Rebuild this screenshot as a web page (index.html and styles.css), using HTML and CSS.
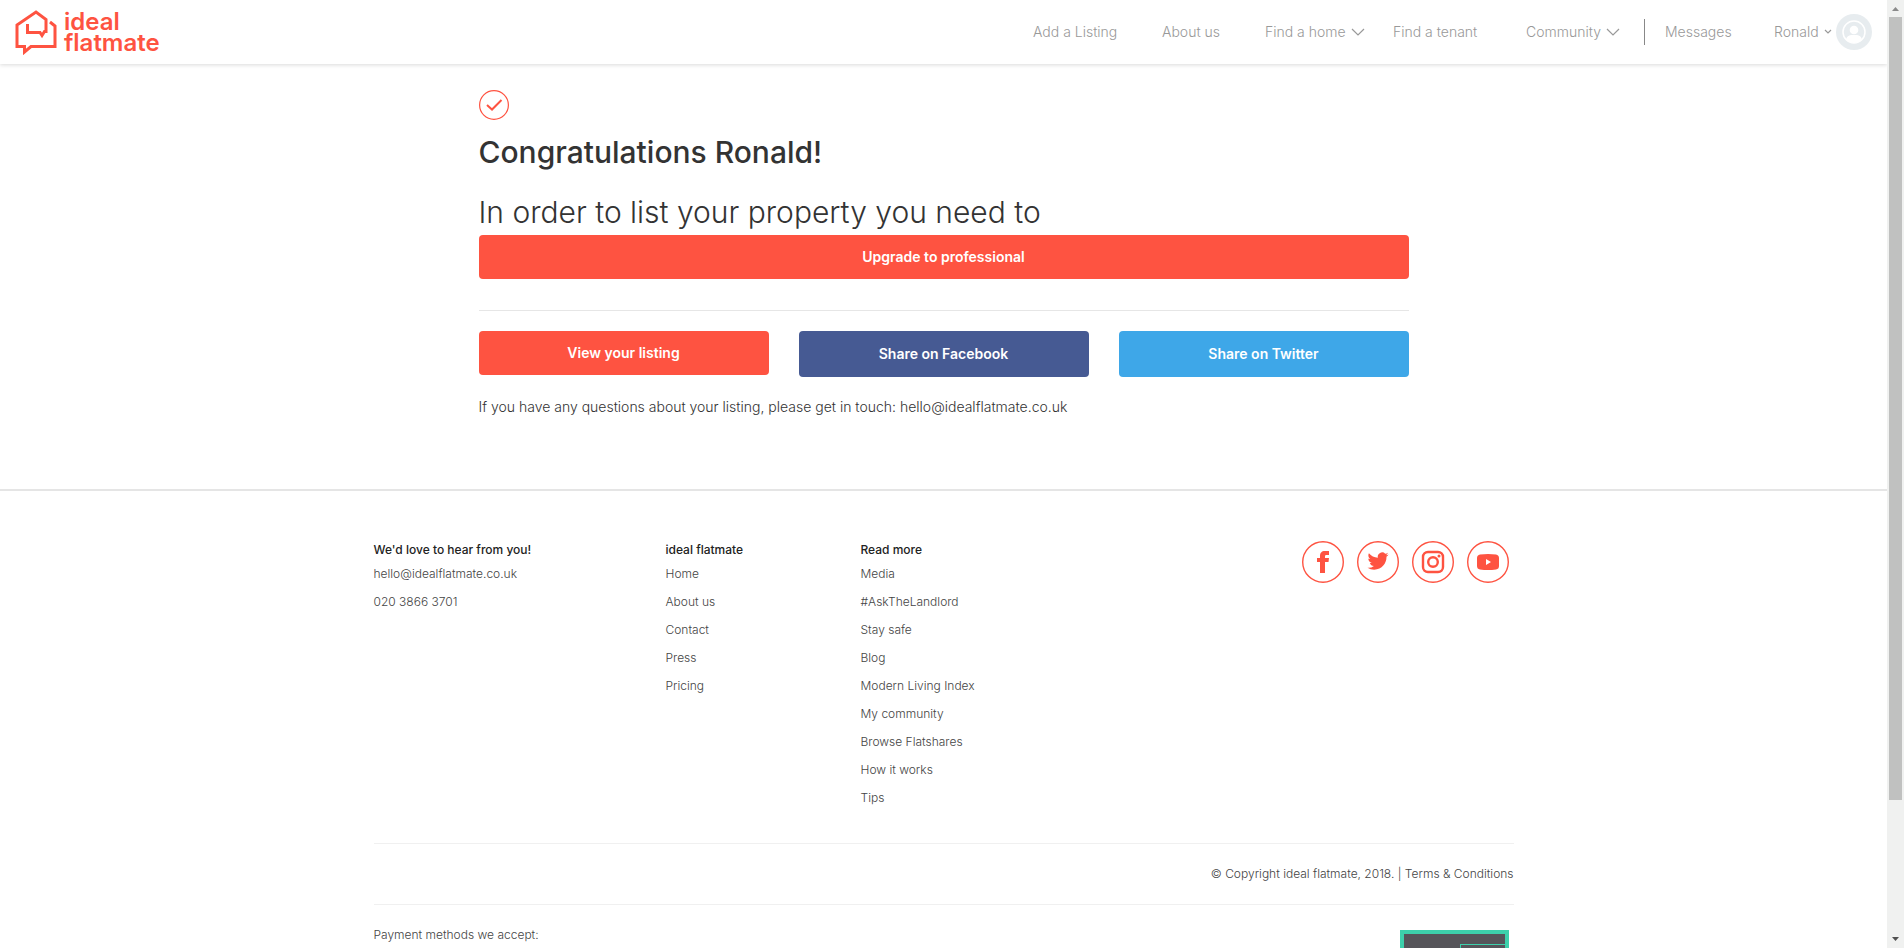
FILE: index.html
```html
<!DOCTYPE html>
<html lang="en">
<head>
<meta charset="utf-8">
<title>ideal flatmate</title>
<link rel="stylesheet" href="styles.css">
</head>
<body>
<div class="page">
  <header class="header">
    <a class="logo" href="#">
      <svg width="42" height="46" viewBox="0 0 42 46" fill="none" stroke="#fe5341" stroke-width="3" aria-hidden="true">
        <path d="M35 13 40 17V37.500H16L9.500 43V37.500H2V16L21 3 31 10.500V22.500H29.500L27 26.500 25 23.500H12.500V15"/>
      </svg>
      <span class="logo-text"><span>ideal</span><span>flatmate</span></span>
    </a>
    <nav class="nav">
      <a href="#">Add a Listing</a>
      <a href="#">About us</a>
      <a class="menu" href="#">Find a home <svg width="14" height="8" viewBox="0 0 14 8" aria-hidden="true"><path d="M1 1 7 7 13 1"/></svg></a>
      <a href="#">Find a tenant</a>
      <a class="menu" href="#">Community <svg width="14" height="8" viewBox="0 0 14 8" aria-hidden="true"><path d="M1 1 7 7 13 1"/></svg></a>
      <a class="messages" href="#">Messages</a>
      <a class="menu" href="#">Ronald <svg width="8" height="6" viewBox="0 0 8 6" aria-hidden="true"><path d="M1 1 4 4 7 1"/></svg></a>
      <svg class="avatar" width="36" height="36" viewBox="0 0 36 36" aria-hidden="true">
        <circle cx="18" cy="18" r="18" fill="#e7ecef"/>
        <circle cx="18" cy="18" r="11" fill="none" stroke="#fff" stroke-width="1.500"/>
        <circle cx="18" cy="16" r="4.300" fill="#fff"/>
        <path d="M10 26C11 21 14 21 18 21S25 21 26 26Q18 32 10 26Z" fill="#fff"/>
      </svg>
    </nav>
  </header>

  <main class="main">
    <svg class="tick" width="30" height="30" viewBox="0 0 30 30" fill="none" stroke="#fe5341" aria-hidden="true">
      <circle cx="15" cy="15" r="14.400" stroke-width="1.200"/>
      <path d="M8 15 13 19.500 22.500 10" stroke-width="2"/>
    </svg>
    <h1>Congratulations Ronald!</h1>
    <h2>In order to list your property you need to</h2>
    <button class="btn" type="button">Upgrade to professional</button>
    <hr class="rule">
    <div class="actions">
      <button class="btn" type="button">View your listing</button>
      <button class="btn facebook" type="button">Share on Facebook</button>
      <button class="btn twitter" type="button">Share on Twitter</button>
    </div>
    <p class="help">If you have any questions about your listing, please get in touch: <a href="#">hello@idealflatmate.co.uk</a></p>
  </main>

  <footer class="footer">
    <div class="container">
      <div class="columns">
        <section>
          <h3>We'd love to hear from you!</h3>
          <ul>
            <li><a href="#">hello@idealflatmate.co.uk</a></li>
            <li><a href="#">020 3866 3701</a></li>
          </ul>
        </section>
        <section>
          <h3>ideal flatmate</h3>
          <ul>
            <li><a href="#">Home</a></li>
            <li><a href="#">About us</a></li>
            <li><a href="#">Contact</a></li>
            <li><a href="#">Press</a></li>
            <li><a href="#">Pricing</a></li>
          </ul>
        </section>
        <section>
          <h3>Read more</h3>
          <ul>
            <li><a href="#">Media</a></li>
            <li><a href="#">#AskTheLandlord</a></li>
            <li><a href="#">Stay safe</a></li>
            <li><a href="#">Blog</a></li>
            <li><a href="#">Modern Living Index</a></li>
            <li><a href="#">My community</a></li>
            <li><a href="#">Browse Flatshares</a></li>
            <li><a href="#">How it works</a></li>
            <li><a href="#">Tips</a></li>
          </ul>
        </section>
        <div class="social">
          <a href="#" aria-label="Facebook"><svg width="42" height="42" viewBox="0 0 42 42"><circle class="ring" cx="21" cy="21" r="20.300"/><path d="M18 32V21H15V17H18V15C18 12 19.500 10 23 10H27V14H24.500C23.300 14 23 14.500 23 15.500V17H27L26.500 21H23V32Z"/></svg></a>
          <a href="#" aria-label="Twitter"><svg width="42" height="42" viewBox="0 0 42 42"><circle class="ring" cx="21" cy="21" r="20.300"/><path transform="translate(10.500 9.500) scale(.88)" d="M23.950 4.570a10 10 0 0 1-2.820.77 4.960 4.960 0 0 0 2.160-2.720c-.95.550-2 .95-3.130 1.180a4.920 4.920 0 0 0-8.380 4.480C7.690 8.090 4.070 6.130 1.640 3.160a4.820 4.820 0 0 0-.67 2.480c0 1.710.87 3.210 2.190 4.100a4.900 4.900 0 0 1-2.230-.62v.06a4.920 4.920 0 0 0 3.950 4.830 5 5 0 0 1-2.210.08 4.940 4.940 0 0 0 4.600 3.420A9.870 9.870 0 0 1 0 19.540a13.990 13.990 0 0 0 7.560 2.210c9.050 0 14-7.500 14-13.980 0-.21 0-.42-.02-.63a9.940 9.940 0 0 0 2.410-2.570z"/></svg></a>
          <a href="#" aria-label="Instagram"><svg width="42" height="42" viewBox="0 0 42 42"><circle class="ring" cx="21" cy="21" r="20.300"/><g fill="none" stroke="#fe5341"><rect x="11" y="11" width="20" height="20" rx="5" stroke-width="2.400"/><circle cx="21" cy="21" r="4.800" stroke-width="2.400"/></g><circle cx="27" cy="15" r="1.500"/></svg></a>
          <a href="#" aria-label="YouTube"><svg width="42" height="42" viewBox="0 0 42 42"><circle class="ring" cx="21" cy="21" r="20.300"/><path fill-rule="evenodd" d="M13 13.500Q21 12.500 29 13.500Q32 14 32 17V25Q32 28 29 28.500Q21 29.500 13 28.500Q10 28 10 25V17Q10 14 13 13.500ZM19 18V24L24 21Z"/></svg></a>
        </div>
      </div>
      <p class="copyright">© Copyright ideal flatmate, 2018. | <a href="#">Terms &amp; Conditions</a></p>
      <div class="payment">
        <p>Payment methods we accept:</p>
        <div class="badge"><div class="badge-inner"></div></div>
      </div>
    </div>
  </footer>
</div>
<div class="scrollbar" aria-hidden="true">
  <svg width="17" height="17" viewBox="0 0 17 17"><path d="M5 11 8.500 7 12 11Z" fill="#8a8a8a"/></svg>
  <div class="track"><div class="thumb"></div></div>
  <svg width="17" height="17" viewBox="0 0 17 17"><path d="M5 6 8.500 10 12 6Z" fill="#505050"/></svg>
</div>
</body>
</html>
```
FILE: styles.css
```css
* { box-sizing: border-box; }

body {
  margin: 0;
  display: flex;
  height: 100vh;
  overflow: hidden;
  background: #fff;
  color: #333;
  font: 300 14px/24px Inter, "Liberation Sans", sans-serif;
}

a { color: inherit; text-decoration: none; }
h1, h2, h3, p, ul { margin: 0; padding: 0; }
ul { list-style: none; }

.page { flex: 1; min-width: 0; overflow: hidden; }

/* Header */
.header {
  display: flex;
  justify-content: space-between;
  align-items: center;
  height: 64px;
  padding: 0 15px;
  box-shadow: 0 1px 4px rgba(0, 0, 0, .15);
}
.logo { display: flex; align-items: center; gap: 7px; color: #fe5341; }
.logo-text { font-size: 24px; font-weight: 600; line-height: 21px; }
.logo-text span { display: block; }
.nav {
  display: grid;
  grid-template-columns: 129px 103px 128px 133px 118px 130px 62px 36px;
  align-items: center;
  color: #999;
  font-size: 14px;
  white-space: nowrap;
}
.nav path { fill: none; stroke: #999; stroke-width: 1.2; }
.nav .avatar path { fill: #fff; stroke: none; }
.menu { display: flex; align-items: center; gap: 5px; }
.messages { padding: 1px 0 1px 20px; border-left: 1px solid #888; }

/* Confirmation */
.main {
  max-width: 960px;
  margin: 0 auto;
  padding: 26px 15px 70px;
}
.tick { display: block; }
h1, h2 { font-size: 30px; line-height: 40px; }
h1 { margin-top: 12px; font-weight: 500; }
h2 { margin-top: 20px; margin-bottom: 3px; font-weight: 300; }
.btn {
  display: block;
  width: 100%;
  height: 44px;
  border: 0;
  border-radius: 4px;
  background: #fe5341;
  color: #fff;
  font: 600 14px/24px Inter, "Liberation Sans", sans-serif;
}
.rule { height: 1px; margin: 31px 0 20px; border: 0; background: #e6e6e6; }
.actions { display: grid; grid-template-columns: repeat(3, 1fr); gap: 30px; }
.actions .facebook { height: 46px; background: #465a93; }
.actions .twitter { height: 46px; background: #3ea7e8; }
.help { margin-top: 18px; }

/* Footer */
.footer { border-top: 2px solid #e5e5e5; font-size: 12px; color: #444; }
.container { max-width: 1170px; margin: 0 auto; padding: 49px 15px 0; }
.columns {
  display: grid;
  grid-template-columns: 292px 195px 1fr auto;
  padding-bottom: 31px;
}
h3 { font-size: 12px; font-weight: 500; line-height: 20px; color: #222; }
li { line-height: 28px; }
.social { display: flex; gap: 13px; align-items: flex-start; padding: 1px 5px 0 0; }
.social svg { display: block; fill: #fe5341; }
.social .ring { fill: none; stroke: #fe5341; stroke-width: 1.4; }
.copyright {
  padding: 18px 0;
  border-top: 1px solid #f0f0f0;
  border-bottom: 1px solid #f0f0f0;
  text-align: right;
}
.payment { display: flex; justify-content: space-between; padding: 18px 5px 0 0; }
.badge {
  width: 109px;
  height: 60px;
  margin-top: 7px;
  padding: 10px 0 0 56px;
  border: 4px solid #3dd0ab;
  background: #56555a;
}
.badge-inner { height: 30px; border: 1px solid #3dd0ab; border-right: 0; }

/* Scrollbar */
.scrollbar { display: flex; flex-direction: column; width: 17px; background: #f0f1f0; }
.scrollbar svg { display: block; }
.track { flex: 1; padding: 0 2px; }
.thumb { height: calc(100% * 6 / 7); background: #c0c1c0; }
```
